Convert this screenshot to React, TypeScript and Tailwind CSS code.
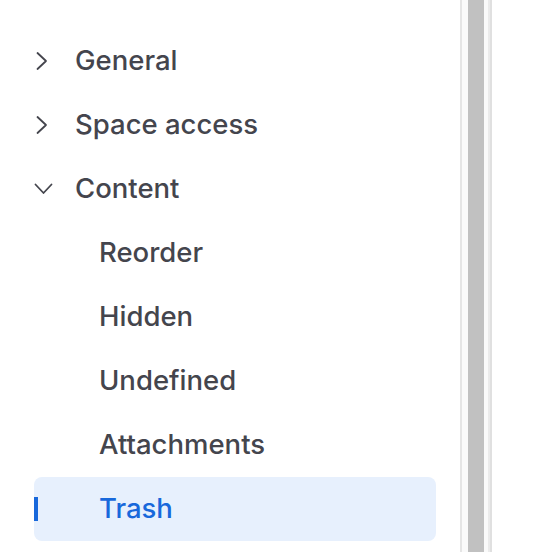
const font = { fontFamily: "Inter, 'Noto Sans', sans-serif" };

function Chevron({ open }: { open?: boolean }) {
  return open ? (
    <svg width="20" height="12" viewBox="0 0 20 12" fill="none" stroke="currentColor" strokeWidth="1.8" strokeLinecap="round" strokeLinejoin="round">
      <path d="M1.5 1.5 L9.5 10 L17.5 1.5" />
    </svg>
  ) : (
    <svg width="12" height="20" viewBox="0 0 12 20" fill="none" stroke="currentColor" strokeWidth="1.8" strokeLinecap="round" strokeLinejoin="round">
      <path d="M1.5 2 L10 10 L1.5 18" />
    </svg>
  );
}

function Group({ label, open }: { label: string; open?: boolean }) {
  return (
    <div className="flex h-16 items-center text-[27.5px] font-medium text-[#44454d]">
      <span className={"flex w-[41px] " + (open ? "pl-0" : "pl-[2px]")}>
        <Chevron open={open} />
      </span>
      {label}
    </div>
  );
}

function Item({ label, active }: { label: string; active?: boolean }) {
  return (
    <div
      className={
        "relative flex h-16 items-center rounded-lg pl-[65px] text-[27.5px] font-medium " +
        (active ? "bg-[#e7f0fd] text-[#1868db]" : "text-[#44454d]")
      }
    >
      {active && <span className="absolute left-0 top-[20px] h-6 w-1 bg-[#1868db]" />}
      {label}
    </div>
  );
}

export default function App() {
  return (
    <div className="flex h-[552px] w-[534px] overflow-hidden bg-white" style={font}>
      <nav className="flex w-[460px] flex-col pl-[34px] pr-6 pt-[29px]">
        <Group label="General" />
        <Group label="Space access" />
        <Group label="Content" open />
        <Item label="Reorder" />
        <Item label="Hidden" />
        <Item label="Undefined" />
        <Item label="Attachments" />
        <Item label="Trash" active />
      </nav>
      <div className="flex h-full w-8 border-l-2 border-[#e5e5e5] bg-[#fafafa] pl-[6px]">
        <div className="h-full w-4 bg-[#c1c1c1]" />
        <div className="ml-auto h-full w-[2px] bg-[#ebebeb]" />
        <div className="h-full w-[2px] bg-[#e0e0e0]" />
      </div>
      <div className="flex-1" />
    </div>
  );
}
